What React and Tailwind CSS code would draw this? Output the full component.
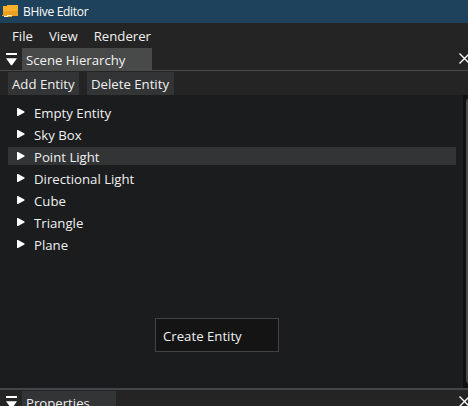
const entities = ['Empty Entity', 'Sky Box', 'Point Light', 'Directional Light', 'Cube', 'Triangle', 'Plane'];

function CollapseIcon() {
  return (
    <svg className="ml-[6px] mt-[5px] h-[13px] w-[11px] shrink-0" viewBox="0 0 11 13" fill="#fff">
      <path d="M0 0h11v2H0zM0 5.3h11L6 12.3H5z" />
    </svg>
  );
}

function CloseIcon() {
  return (
    <svg className="ml-auto mt-[5px] h-3 w-[9px] shrink-0" viewBox="0 0 9 12" fill="none" stroke="#fff" strokeWidth="1.3">
      <path d="M0.5 0.5l10 10M0.5 10.5l10-10" />
    </svg>
  );
}

function LogoIcon() {
  return (
    <svg className="ml-[2px] h-3 w-4 shrink-0" viewBox="0 0 16 12">
      <path d="M1 1h4V0h11v11H10v1H2v-1H0v-1h1z" fill="#eba022" />
      <path d="M1 1h4V0h11v6H1z" fill="#f7b12d" />
      <path d="M2 11h3v-1h5v1H6v1H2z" fill="#fff0c8" />
    </svg>
  );
}

function PanelHeader({ title, active }) {
  return (
    <div className={'flex h-[22px] shrink-0 ' + (active ? '' : 'mt-px')}>
      <CollapseIcon />
      <div className={'ml-[5px] h-[22px] pl-1 leading-[24px] ' + (active ? 'w-[130px] bg-[#484a49]' : 'w-[94px] bg-[#333436]')}>
        {title}
      </div>
      <CloseIcon />
    </div>
  );
}

export default function App() {
  return (
    <div className="flex h-[406px] w-[468px] flex-col overflow-hidden whitespace-nowrap bg-[#242424] font-['Open_Sans',sans-serif] text-[13.2px] text-[#f0f0f0]">
      <header className="flex h-[23px] shrink-0 items-center bg-[#1e425b] text-white">
        <div className="-mt-px flex">
          <LogoIcon />
        </div>
        <span className="ml-[5px] text-[12px] tracking-[-0.3px]">BHive Editor</span>
      </header>
      <nav className="flex h-[25px] shrink-0 gap-4 pl-3 leading-[27px]">
        <span>File</span>
        <span>View</span>
        <span>Renderer</span>
      </nav>
      <PanelHeader title="Scene Hierarchy" active />
      <div className="flex h-[25px] shrink-0 gap-2 border-t border-[#494a4a] pl-2 pt-px leading-[25px]">
        <button className="h-[23px] w-[71px] bg-[#333436] pl-1 text-left">Add Entity</button>
        <button className="h-[23px] w-[87px] bg-[#333436] pl-1 text-left">Delete Entity</button>
      </div>
      <main className="relative flex h-[293px] shrink-0 bg-[#1b1c1e]">
        <ul className="ml-2 mt-[8px] w-[448px]">
          {entities.map((name) => (
            <li key={name} className={'mb-1 flex h-[18px] leading-[20px] ' + (name === 'Point Light' ? 'bg-[#333436]' : '')}>
              <svg className="ml-[9px] mt-[5px] h-[9px] w-2 shrink-0" viewBox="0 0 8 9" fill="#fff">
                <path d="M0 0h1l6.5 3.6v.8L1 8H0z" />
              </svg>
              <span className="ml-[9px]">{name}</span>
            </li>
          ))}
        </ul>
        <div className="ml-auto h-full w-[5px] bg-[#111111] pl-[3px] pt-[3px]">
          <div className="h-[286px] w-1 rounded-l bg-[#494a4b]" />
        </div>
        <div className="absolute left-[155px] top-[223px] h-[34px] w-[124px] border border-[#434448] bg-[#141414] pl-[7px] leading-[34px]">
          Create Entity
        </div>
      </main>
      <div className="h-[2px] shrink-0 bg-[#434448]" />
      <PanelHeader title="Properties" />
    </div>
  );
}
